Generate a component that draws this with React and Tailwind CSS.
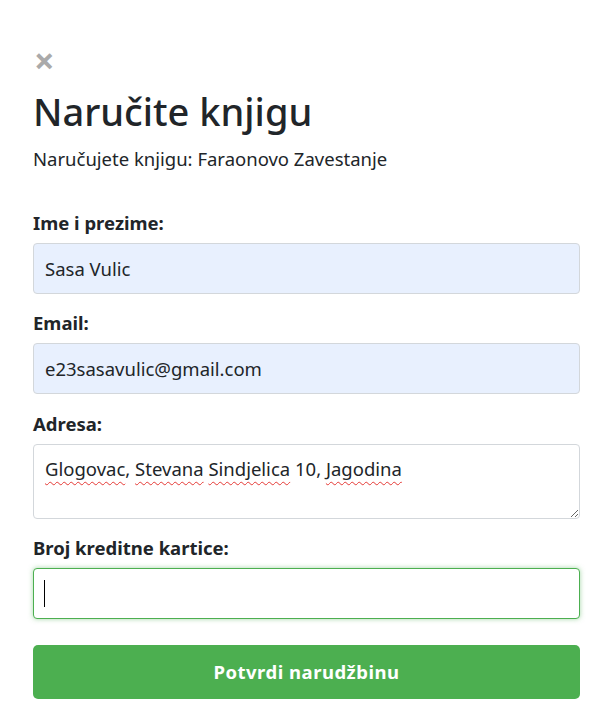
import React from 'react';

const squiggle = 'underline decoration-wavy decoration-[#e53935] decoration-1 underline-offset-[5px]';

const Label = ({ children, className = '' }) => (
  <label className={`block text-[18.5px] font-bold text-[#212529] leading-[27px] mb-[7px] ${className}`}>
    {children}
  </label>
);

const inputCls =
  'h-[51px] w-full rounded-[4px] border border-[#d3d7db] bg-[#e8f0fe] px-[11px] text-[18.5px] text-[#212529] outline-none mb-[15px]';

export default function App() {
  return (
    <div
      className="bg-white min-h-[728px] pl-[33px] pr-[28px] pt-[44px]"
      style={{ fontFamily: '"Noto Sans", "Open Sans", sans-serif' }}
    >
      {/* Close */}
      <button className="block text-[36px] leading-[34px] font-bold text-[#aaaaaa] ml-[1px]">×</button>

      {/* Heading */}
      <h2 className="text-[38px] leading-[46px] font-medium text-[#212529] mt-[10px]">Naručite knjigu</h2>
      <p className="text-[18.5px] leading-[27px] text-[#212529] mt-[11px] mb-[37px]">
        Naručujete knjigu: Faraonovo Zavestanje
      </p>

      <form className="flex flex-col">
        <Label>Ime i prezime:</Label>
        <input defaultValue="Sasa Vulic" className={inputCls} />

        <Label>Email:</Label>
        <input defaultValue="e23sasavulic@gmail.com" className={inputCls} />

        <Label className="mt-[1px]">Adresa:</Label>
        <div className="h-[75px] w-full rounded-[4px] border border-[#d3d7db] bg-white px-[11px] pt-[10px] text-[18.5px] leading-[27px] text-[#212529] resize-y overflow-auto mb-[15px]">
          <span className={squiggle}>Glogovac</span>, <span className={squiggle}>Stevana</span>{' '}
          <span className={squiggle}>Sindjelica</span> 10, <span className={squiggle}>Jagodina</span>
        </div>

        <Label>Broj kreditne kartice:</Label>
        <div className="relative mb-[26px]">
          <input
            className="h-[51px] w-full rounded-[4px] border border-[#4caf50] bg-white px-[11px] text-[18.5px] outline-none shadow-[0_0_5px_rgba(76,175,80,0.5)]"
          />
          <span className="absolute left-[11px] top-[12px] h-[27px] w-px bg-black" />
        </div>

        <button
          type="button"
          className="h-[54px] w-full rounded-[5px] bg-[#4caf50] text-white text-[18.5px] font-bold tracking-[0.5px]"
        >
          Potvrdi narudžbinu
        </button>
      </form>
    </div>
  );
}
